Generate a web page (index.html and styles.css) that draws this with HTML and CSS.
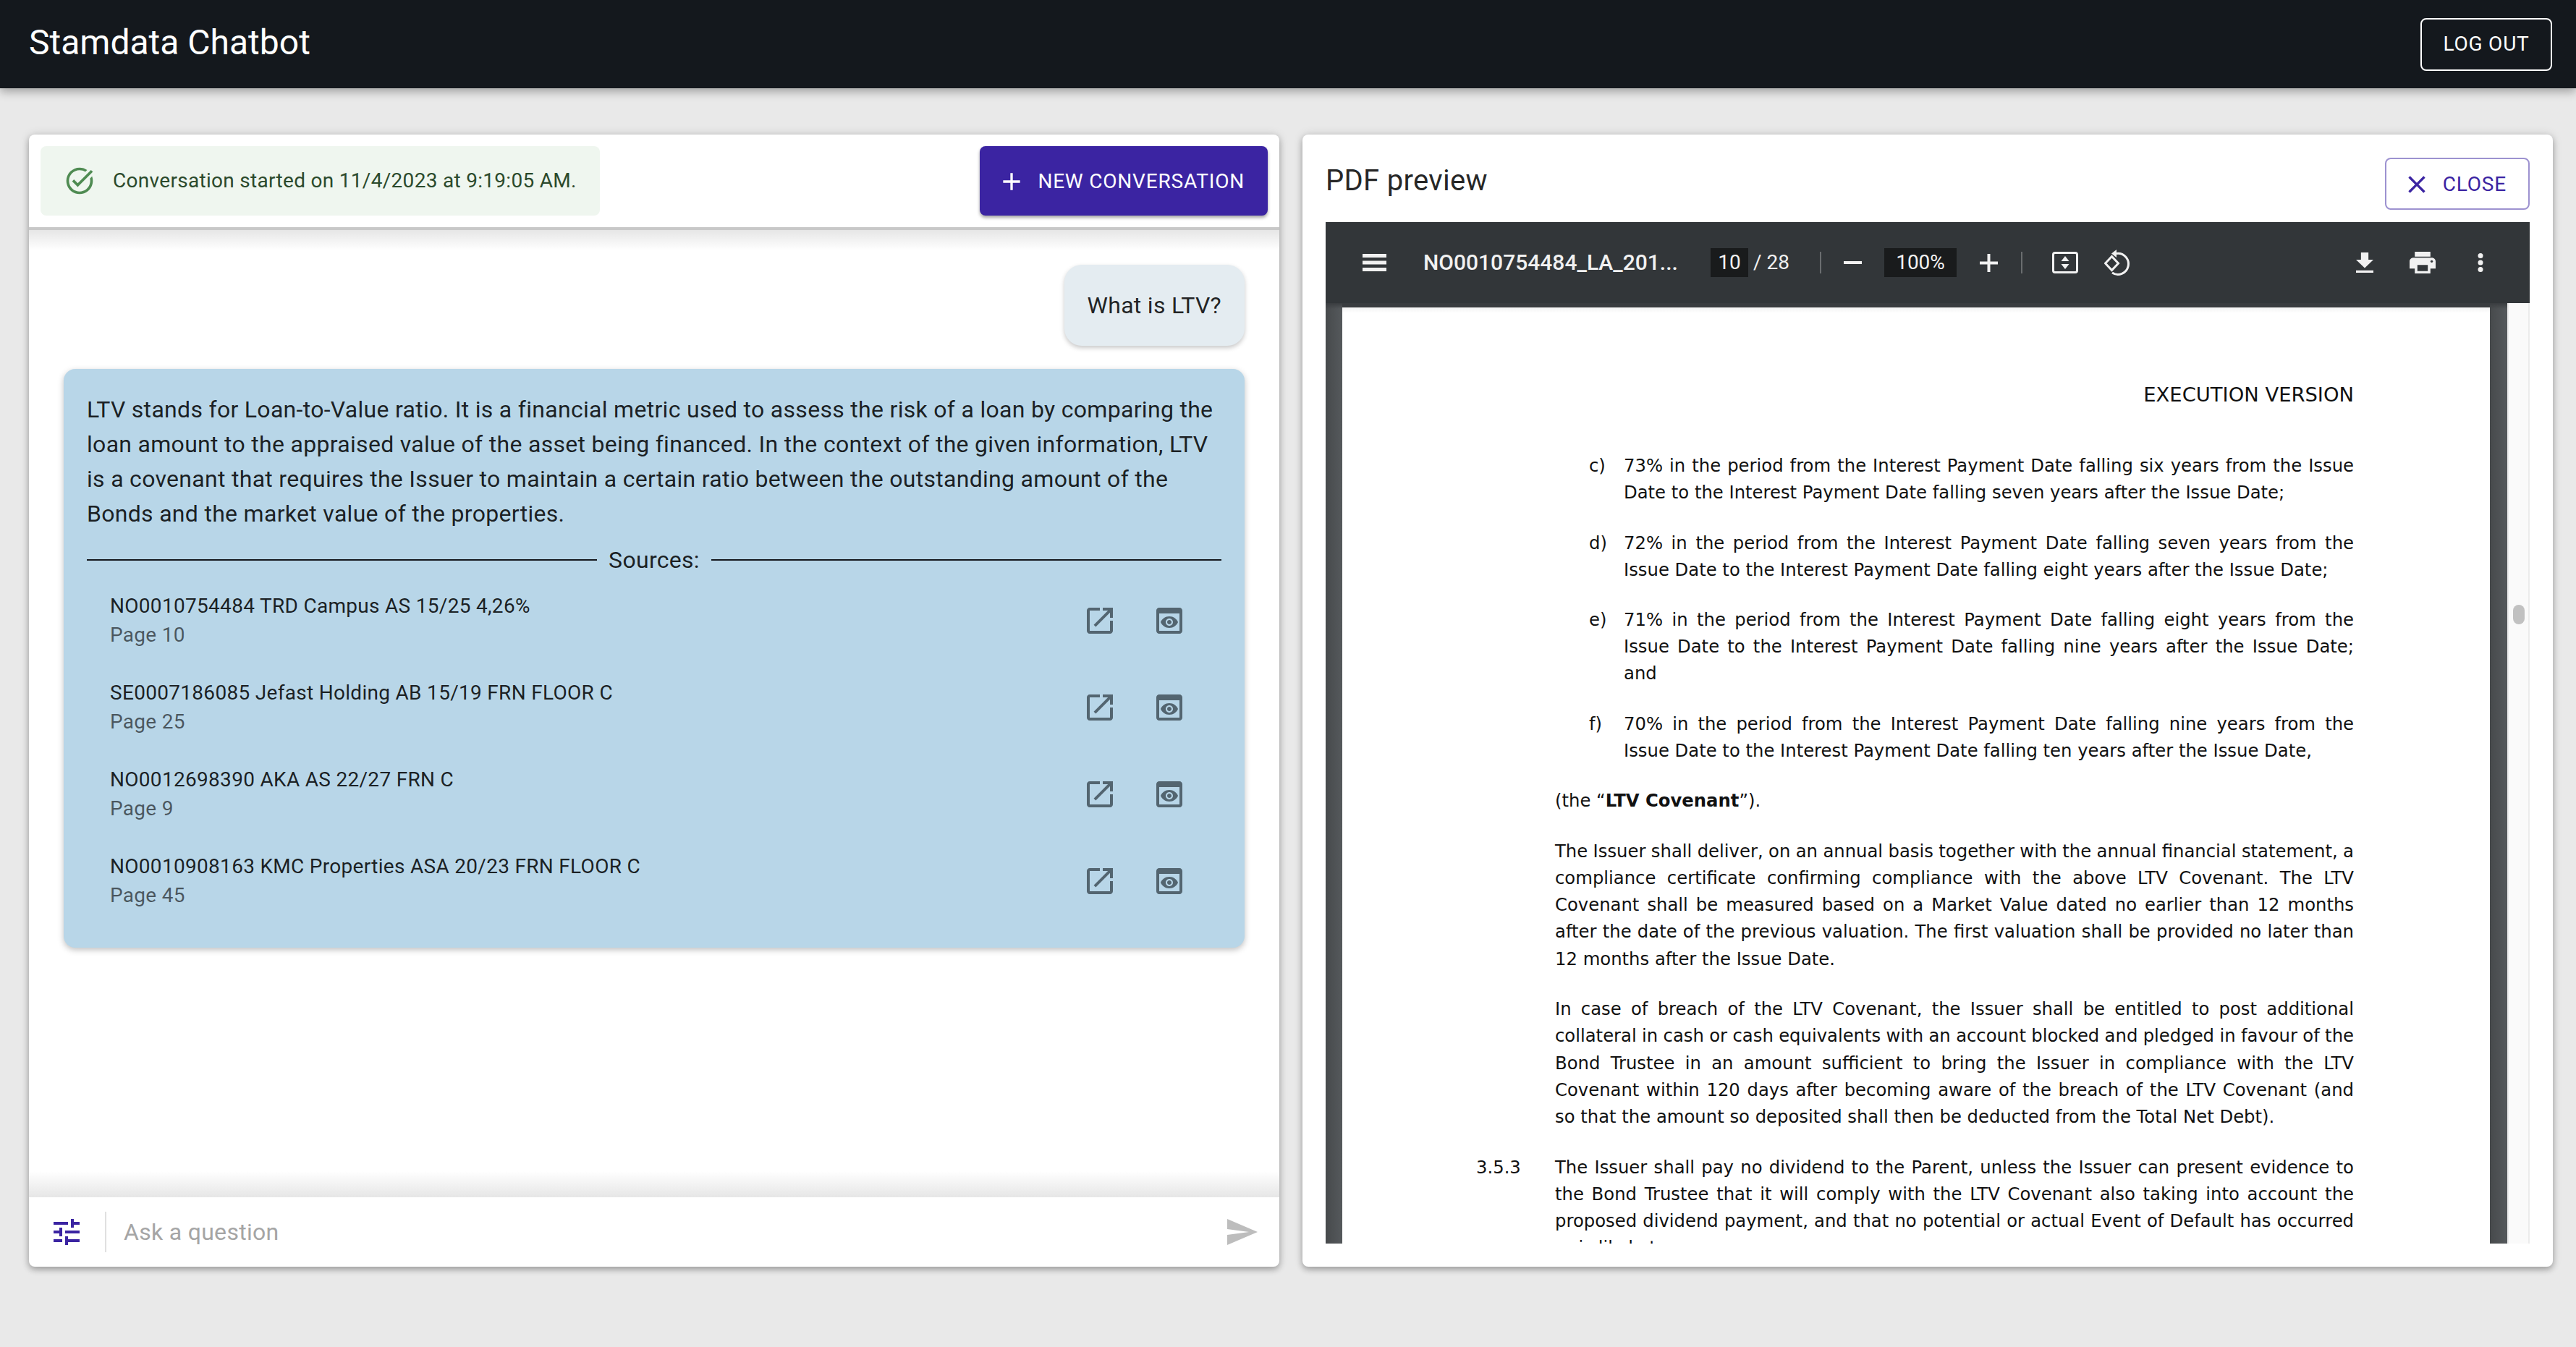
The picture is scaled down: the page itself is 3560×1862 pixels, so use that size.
FILE: index.html
```html
<!DOCTYPE html>
<html lang="en">
<head>
<meta charset="utf-8">
<title>Stamdata Chatbot</title>
<link rel="stylesheet" href="styles.css">
</head>
<body>
<svg class="defs" aria-hidden="true">
  <symbol id="i-open" viewBox="0 0 24 24"><path d="M19 19H5V5h7V3H5c-1.11 0-2 .9-2 2v14c0 1.1.89 2 2 2h14c1.1 0 2-.9 2-2v-7h-2v7zM14 3v2h3.59l-9.83 9.83 1.41 1.41L19 6.41V10h2V3h-7z"/></symbol>
  <symbol id="i-preview" viewBox="0 0 24 24"><path d="M19 3H5c-1.11 0-2 .9-2 2v14c0 1.1.89 2 2 2h14c1.1 0 2-.9 2-2V5c0-1.1-.89-2-2-2zm0 16H5V7h14v12zm-5.5-6c0 .83-.67 1.5-1.5 1.5s-1.5-.67-1.5-1.5.67-1.5 1.5-1.5 1.5.67 1.5 1.5zM12 9c-2.73 0-5.06 1.66-6 4 .94 2.34 3.27 4 6 4s5.06-1.66 6-4c-.94-2.34-3.27-4-6-4zm0 6.5c-1.38 0-2.5-1.12-2.5-2.5s1.12-2.5 2.5-2.5 2.5 1.12 2.5 2.5-1.12 2.5-2.5 2.5z"/></symbol>
</svg>
<header class="appbar">
  <h1 class="brand">Stamdata Chatbot</h1>
  <button class="btn btn-logout">Log out</button>
</header>
<main class="main">
  <section class="panel chat-panel">
    <div class="chat-head">
      <div class="alert">
        <svg class="alert-icon" viewBox="0 0 24 24"><path d="M22 5.18 10.59 16.6l-4.24-4.24 1.41-1.41 2.83 2.83 10-10L22 5.18zm-2.21 5.04c.13.57.21 1.17.21 1.78 0 4.42-3.58 8-8 8s-8-3.58-8-8 3.58-8 8-8c1.58 0 3.04.46 4.28 1.22l1.44-1.44C16.1 2.67 14.13 2 12 2 6.48 2 2 6.48 2 12s4.48 10 10 10 10-4.48 10-10c0-1.19-.22-2.33-.6-3.39l-1.61 1.61z"/></svg>
        <span>Conversation started on 11/4/2023 at 9:19:05 AM.</span>
      </div>
      <button class="btn btn-new">
        <svg class="btn-icon" viewBox="0 0 24 24"><path d="M19 13h-6v6h-2v-6H5v-2h6V5h2v6h6v2z"/></svg>
        New conversation
      </button>
    </div>
    <div class="chat-body">
      <div class="bubble-user">What is LTV?</div>
      <div class="bubble-bot">
        <p class="answer">LTV stands for Loan-to-Value ratio. It is a financial metric used to assess the risk of a loan by comparing the loan amount to the appraised value of the asset being financed. In the context of the given information, LTV is a covenant that requires the Issuer to maintain a certain ratio between the outstanding amount of the Bonds and the market value of the properties.</p>
        <div class="sources-rule"><span>Sources:</span></div>
        <ul class="sources">
          <li class="source">
            <div class="source-text"><div class="source-name">NO0010754484 TRD Campus AS 15/25 4,26%</div><div class="source-page">Page 10</div></div>
            <svg class="source-icon"><use href="#i-open"/></svg><svg class="source-icon"><use href="#i-preview"/></svg>
          </li>
          <li class="source">
            <div class="source-text"><div class="source-name">SE0007186085 Jefast Holding AB 15/19 FRN FLOOR C</div><div class="source-page">Page 25</div></div>
            <svg class="source-icon"><use href="#i-open"/></svg><svg class="source-icon"><use href="#i-preview"/></svg>
          </li>
          <li class="source">
            <div class="source-text"><div class="source-name">NO0012698390 AKA AS 22/27 FRN C</div><div class="source-page">Page 9</div></div>
            <svg class="source-icon"><use href="#i-open"/></svg><svg class="source-icon"><use href="#i-preview"/></svg>
          </li>
          <li class="source">
            <div class="source-text"><div class="source-name">NO0010908163 KMC Properties ASA 20/23 FRN FLOOR C</div><div class="source-page">Page 45</div></div>
            <svg class="source-icon"><use href="#i-open"/></svg><svg class="source-icon"><use href="#i-preview"/></svg>
          </li>
        </ul>
      </div>
    </div>
    <div class="chat-input">
      <svg class="tune" viewBox="0 0 24 24"><path d="M3 17v2h6v-2H3zM3 5v2h10V5H3zm10 16v-2h8v-2h-8v-2h-2v6h2zM7 9v2H3v2h4v2h2V9H7zm14 4v-2H11v2h10zm-6-4h2V7h4V5h-4V3h-2v6z"/></svg>
      <div class="input-sep"></div>
      <div class="placeholder">Ask a question</div>
      <svg class="send" viewBox="0 0 24 24"><path d="M2.01 21 23 12 2.01 3 2 10l15 2-15 2z"/></svg>
    </div>
  </section>

  <section class="panel pdf-panel">
    <div class="pdf-head">
      <h2 class="pdf-title">PDF preview</h2>
      <button class="btn btn-close">
        <svg class="btn-icon" viewBox="0 0 24 24"><path d="M19 6.41 17.59 5 12 10.59 6.41 5 5 6.41 10.59 12 5 17.59 6.41 19 12 13.41 17.59 19 19 17.59 13.41 12z"/></svg>
        Close
      </button>
    </div>
    <div class="viewer">
      <div class="toolbar">
        <svg class="tb-menu" viewBox="0 0 33 24"><rect width="33" height="5"/><rect y="9.5" width="33" height="5"/><rect y="19" width="33" height="5"/></svg>
        <div class="tb-file">NO0010754484_LA_201...</div>
        <div class="tb-box tb-page">10</div>
        <div class="tb-total">/ 28</div>
        <div class="tb-sep tb-sep-a"></div>
        <svg class="tb-minus" viewBox="0 0 25 25"><rect y="10" width="25" height="4"/></svg>
        <div class="tb-box tb-zoom">100%</div>
        <svg class="tb-plus" viewBox="0 0 25 25"><rect y="10.5" width="25" height="4"/><rect x="10.5" width="4" height="25"/></svg>
        <div class="tb-sep tb-sep-b"></div>
        <svg class="tb-fit" viewBox="0 0 36 30"><rect class="tb-line" x="1.5" y="1.5" width="33" height="27" rx="2.5"/><path d="M18 6l5.5 7h-11zM18 24l-5.5-7h11z"/></svg>
        <svg class="tb-rotate" viewBox="0 0 36 36"><path class="tb-line" d="M17 5.5A14.5 14.5 0 1 1 11 32M10.500 9.500L19.500 19 10.500 28.500 1.500 19z"/><path d="M17 0v11l-7-5.500z"/></svg>
        <svg class="tb-download" viewBox="5 3 14 17" preserveAspectRatio="none"><path d="M19 9h-4V3H9v6H5l7 7 7-7zM5 18v2h14v-2H5z"/></svg>
        <svg class="tb-print" viewBox="2 3 20 18" preserveAspectRatio="none"><path d="M19 8H5c-1.66 0-3 1.340-3 3v6h4v4h12v-4h4v-6c0-1.660-1.340-3-3-3zm-3 11H8v-5h8v5zm3-7c-.55 0-1-.45-1-1s.45-1 1-1 1 .45 1 1-.45 1-1 1zm-1-9H6v4h12V3z"/></svg>
        <svg class="tb-more" viewBox="0 0 10 26"><circle cx="5" cy="3.500" r="3.500"/><circle cx="5" cy="13" r="3.500"/><circle cx="5" cy="22.500" r="3.500"/></svg>
      </div>
      <div class="viewport">
        <div class="gutter gutter-left"></div>
        <article class="page">
          <p class="doc-version">EXECUTION VERSION</p>
          <div class="item">
            <span class="item-label">c)</span>
            <div class="item-body">
              <div class="ln">73% in the period from the Interest Payment Date falling six years from the Issue</div>
              <div class="ln-end">Date to the Interest Payment Date falling seven years after the Issue Date;</div>
            </div>
          </div>
          <div class="item">
            <span class="item-label">d)</span>
            <div class="item-body">
              <div class="ln">72% in the period from the Interest Payment Date falling seven years from the</div>
              <div class="ln-end">Issue Date to the Interest Payment Date falling eight years after the Issue Date;</div>
            </div>
          </div>
          <div class="item">
            <span class="item-label">e)</span>
            <div class="item-body">
              <div class="ln">71% in the period from the Interest Payment Date falling eight years from the</div>
              <div class="ln">Issue Date to the Interest Payment Date falling nine years after the Issue Date;</div>
              <div class="ln-end">and</div>
            </div>
          </div>
          <div class="item">
            <span class="item-label">f)</span>
            <div class="item-body">
              <div class="ln">70% in the period from the Interest Payment Date falling nine years from the</div>
              <div class="ln-end">Issue Date to the Interest Payment Date falling ten years after the Issue Date,</div>
            </div>
          </div>
          <div class="para"><div class="ln-end">(the “<b>LTV Covenant</b>”).</div></div>
          <div class="para">
            <div class="ln">The Issuer shall deliver, on an annual basis together with the annual financial statement, a</div>
            <div class="ln">compliance certificate confirming compliance with the above LTV Covenant. The LTV</div>
            <div class="ln">Covenant shall be measured based on a Market Value dated no earlier than 12 months</div>
            <div class="ln">after the date of the previous valuation. The first valuation shall be provided no later than</div>
            <div class="ln-end">12 months after the Issue Date.</div>
          </div>
          <div class="para">
            <div class="ln">In case of breach of the LTV Covenant, the Issuer shall be entitled to post additional</div>
            <div class="ln">collateral in cash or cash equivalents with an account blocked and pledged in favour of the</div>
            <div class="ln">Bond Trustee in an amount sufficient to bring the Issuer in compliance with the LTV</div>
            <div class="ln">Covenant within 120 days after becoming aware of the breach of the LTV Covenant (and</div>
            <div class="ln-end">so that the amount so deposited shall then be deducted from the Total Net Debt).</div>
          </div>
          <div class="para numbered">
            <span class="para-no">3.5.3</span>
            <div class="ln">The Issuer shall pay no dividend to the Parent, unless the Issuer can present evidence to</div>
            <div class="ln">the Bond Trustee that it will comply with the LTV Covenant also taking into account the</div>
            <div class="ln">proposed dividend payment, and that no potential or actual Event of Default has occurred</div>
            <div class="ln-end">or is likely to occur.</div>
          </div>
        </article>
        <div class="gutter gutter-right"></div>
        <div class="scrollbar"><div class="thumb"></div></div>
      </div>
    </div>
  </section>
</main>
</body>
</html>
```
FILE: styles.css
```css
* { box-sizing: border-box; }
html, body { margin: 0; height: 100%; }
body {
  background: #e9e9e9;
  color: rgba(0, 0, 0, .87);
  font-family: Roboto, "Liberation Sans", sans-serif;
  font-size: 32px;
  line-height: 48px;
  letter-spacing: .3px;
  overflow: hidden;
}
.defs { display: none; }

/* App bar */
.appbar {
  height: 122px;
  background: #14181d;
  box-shadow: 0 5px 12px rgba(0, 0, 0, .3);
  display: flex;
  align-items: center;
  justify-content: space-between;
  padding: 0 33px 0 40px;
  position: relative;
}
.brand {
  margin: 0 0 4px;
  font-size: 48px;
  line-height: 56px;
  font-weight: 400;
  letter-spacing: 0;
  color: #fff;
}
.btn {
  font-family: inherit;
  font-size: 28px;
  font-weight: 400;
  letter-spacing: .8px;
  line-height: 40px;
  text-transform: uppercase;
  border-radius: 8px;
  display: flex;
  align-items: center;
  background: none;
  cursor: pointer;
}
.btn-logout {
  height: 73px;
  width: 182px;
  justify-content: center;
  border: 2px solid #fff;
  color: #fff;
  padding: 0;
}
.btn-icon { width: 40px; height: 40px; fill: currentColor; margin: 0 16px 0 -8px; }

/* Layout */
.main {
  height: 1629px;
  padding: 64px 32px 0 40px;
  display: flex;
  gap: 32px;
}
.panel {
  height: 1565px;
  background: #fff;
  border-radius: 8px;
  box-shadow: 0 4px 8px rgba(0, 0, 0, .28), 0 0 14px rgba(0, 0, 0, .12);
  display: flex;
  flex-direction: column;
  min-width: 0;
}
.chat-panel { width: 1728px; flex: none; }
.pdf-panel { flex: 1; padding: 0 32px; }

/* Chat */
.chat-head {
  height: 128px;
  flex: none;
  padding: 16px;
  display: flex;
  justify-content: space-between;
}
.alert {
  background: #eff6ef;
  color: #2b4a2c;
  border-radius: 8px;
  padding: 0 32px;
  display: flex;
  align-items: center;
  font-size: 28px;
  gap: 24px;
}
.alert-icon { width: 44px; height: 44px; fill: #4f8b52; }
.btn-new {
  background: #3b24a2;
  color: #fff;
  border: 0;
  padding: 1px 32px 0;
  box-shadow: 0 3px 4px rgba(0, 0, 0, .35);
}
.chat-body {
  flex: 1;
  border-top: 4px solid #c8c8c8;
  background: linear-gradient(#e6e6e6, #fff 28px, #fff calc(100% - 36px), #e6e6e6);
  padding: 48px 48px 0;
  display: flex;
  flex-direction: column;
  align-items: flex-end;
  gap: 32px;
}
.bubble-user {
  background: #e4ecf1;
  border-radius: 24px;
  padding: 32px;
  box-shadow: 0 3px 6px rgba(0, 0, 0, .22);
}
.bubble-bot {
  width: 1632px;
  background: #b8d6e8;
  border-radius: 16px;
  padding: 32px;
  box-shadow: 0 3px 8px rgba(0, 0, 0, .25);
}
.answer { margin: 0; }
.sources-rule {
  height: 64px;
  display: flex;
  align-items: center;
  gap: 16px;
  padding-top: 16px;
}
.sources-rule::before, .sources-rule::after {
  content: "";
  flex: 1;
  border-top: 2px solid #14181d;
}
.sources { list-style: none; margin: 0; padding: 0; }
.source {
  height: 120px;
  display: flex;
  align-items: center;
  padding: 0 54px 0 32px;
  gap: 60px;
}
.source-text { flex: 1; }
.source-name { font-size: 28px; line-height: 42px; }
.source-page { font-size: 28px; line-height: 38px; margin-bottom: 2px; color: rgba(0, 0, 0, .6); }
.source-icon { width: 48px; height: 48px; fill: #536570; margin: 0 -6px; }

/* Input */
.chat-input {
  height: 96px;
  flex: none;
  display: flex;
  align-items: center;
  padding: 0 28px;
}
.tune { width: 48px; height: 48px; fill: #3b24a2; }
.input-sep { width: 2px; height: 56px; background: #e0e0e0; margin: 0 24px 0 29px; }
.placeholder { flex: 1; color: #a5a5a5; }
.send { width: 48px; height: 48px; fill: #bdbdbd; }

/* PDF */
.pdf-head {
  height: 121px;
  flex: none;
  display: flex;
  align-items: flex-start;
  justify-content: space-between;
}
.pdf-title {
  margin: 40px 0 0;
  font-size: 40px;
  line-height: 48px;
  font-weight: 400;
}
.btn-close {
  margin-top: 32px;
  height: 72px;
  padding: 1px 30px 0;
  border: 2px solid #9d92d0;
  color: #3b24a2;
}
.viewer { flex: 1; max-height: 1412px; display: flex; flex-direction: column; overflow: hidden; }
.toolbar {
  height: 112px;
  flex: none;
  background: #323639;
  color: #f1f1f1;
  fill: #f1f1f1;
  font-size: 28px;
  line-height: 40px;
  letter-spacing: 0;
  display: flex;
  align-items: center;
  padding: 0 63px 0 51px;
  position: relative;
}
.tb-line { fill: none; stroke: #f1f1f1; stroke-width: 3; }
.tb-menu { width: 33px; height: 24px; }
.tb-file { width: 352px; margin-left: 51px; font-size: 30px; font-weight: 500; white-space: nowrap; }
.tb-box { height: 40px; background: #191b1c; text-align: center; }
.tb-page { width: 52px; margin-left: 45px; }
.tb-total { width: 50px; margin-left: 7px; }
.tb-sep { width: 2px; height: 30px; background: #6a6d6f; }
.tb-sep-a { margin-left: 42px; }
.tb-minus { width: 25px; height: 25px; margin-left: 31px; }
.tb-zoom { width: 100px; margin-left: 31px; }
.tb-plus { width: 25px; height: 25px; margin-left: 32px; }
.tb-sep-b { margin-left: 32px; }
.tb-fit { width: 36px; height: 30px; margin-left: 41px; }
.tb-rotate { width: 36px; height: 36px; margin-left: 36px; }
.tb-download { width: 24px; height: 28px; margin-left: auto; }
.tb-print { width: 36px; height: 30px; margin-left: 50px; }
.tb-more { width: 10px; height: 26px; margin-left: 57px; }

.viewport { flex: 1; min-height: 0; display: flex; overflow: hidden; background: #393c3f; }
.gutter { flex: none; background: linear-gradient(#3a3d40, rgba(58, 61, 64, 0) 8px), linear-gradient(90deg, #474a4c, #55595c); }
.gutter-left { width: 23px; }
.gutter-right { width: 24px; }
.page {
  width: 1586px;
  flex: none;
  margin-top: 6px;
  background: linear-gradient(#f4f4f4, #fff 8px);
  padding: 102px 188px 0 294px;
  color: #111;
  font-family: "DejaVu Sans", Verdana, sans-serif;
  font-size: 24.3px;
  line-height: 37.2px;
  letter-spacing: 0;
}
.doc-version { margin: 0 0 61px; text-align: right; font-size: 27.4px; }
.item { position: relative; padding-left: 95px; margin-bottom: 32px; }
.item-label { position: absolute; left: 47px; top: 0; }
.para { margin-bottom: 32.5px; position: relative; }
.para-no { position: absolute; left: -109px; top: 0; }
.ln { text-align: justify; text-align-last: justify; word-spacing: -3px; }
.ln-end { text-align: left; }
.scrollbar {
  flex: 1;
  background: #fafafa;
  border-left: 2px solid #ececec;
  border-right: 2px solid #ececec;
  position: relative;
}
.thumb {
  position: absolute;
  left: 6px;
  top: 417px;
  width: 16px;
  height: 27px;
  border-radius: 8px;
  background: #c1c1c1;
}
```
